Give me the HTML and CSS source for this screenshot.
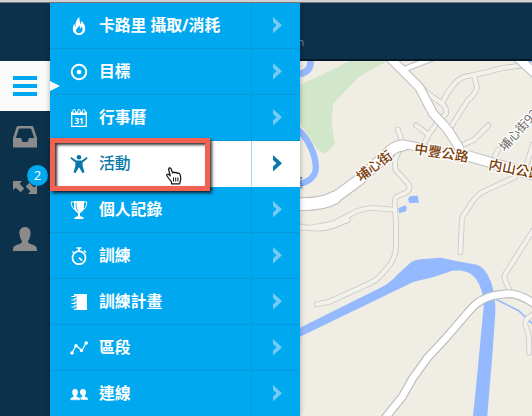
FILE: index.html
```html
<!DOCTYPE html>
<html lang="zh-Hant">
<head>
<meta charset="utf-8">
<title>活動</title>
<link rel="stylesheet" href="styles.css">
</head>
<body>
<div class="app">
  <nav class="rail">
    <div class="rail-item rail-active">
      <svg width="24" height="20" viewBox="0 0 24 20"><path fill="#00a8ef" d="M0 0h24v4H0zM0 8h24v4H0zM0 16h24v4H0z"/></svg>
    </div>
    <div class="rail-item">
      <svg width="24" height="22" viewBox="0 0 24 22"><path fill="#8b8b8b" fill-rule="evenodd" d="M5 0h14q1 0 1.400 1L24 12v9.500H0V12L3.600 1Q4 0 5 0zM6 2.500 2.800 12H8l1.500 4h5l1.500-4h5.200L18 2.500z"/></svg>
    </div>
    <div class="rail-item">
      <svg width="24" height="14" viewBox="0 0 24 14"><g fill="#8b8b8b"><path d="M0 0h9L6.700 2.700l4.500 4.800-3.500 3.800-4.900-4.600L0 9z"/><path d="M24 13h-9l2.500-2.700-4.800-4.800 3.500-3.800 5 4.700L24 4z"/></g></svg>
      <span class="badge">2</span>
    </div>
    <div class="rail-item">
      <svg width="24" height="24" viewBox="0 0 24 24"><path fill="#8b8b8b" d="M12 0c4 0 6 3 5.500 7-.3 3-1.200 5.500-2.500 7 0 2 1 2.500 4 3.500 4 1.300 5 2 5 6.500H0c0-4.500 1-5.200 5-6.500 3-1 4-1.500 4-3.500-1.300-1.500-2.200-4-2.500-7C6 3 8 0 12 0z"/></svg>
    </div>
  </nav>

  <main class="stage">
    <header class="topbar"><span>n</span></header>
    <svg class="map" viewBox="6 33 696 1065">
      <path fill="#d2e6c9" d="M6 105Q100 62 155 33H268L182 80 105 162 101 222 111 283 81 312 60 300 6 220z"/>
      <g fill="none" stroke="#95b9ff">
        <path stroke-width="20" d="M38 33Q38 66 6 72"/>
        <path stroke-width="19" d="M0 240Q28 262 46 310C62 360 55 388 6 403"/>
        <path stroke-width="5" d="M594 748 662 782 704 822"/>
      </g>
      <g fill="#95b9ff">
        <path d="M6 833 262 706Q285 690 300 672L339 637Q350 630 368 628L428 623 475 633 536 644Q562 650 579 696 594 740 592 790L582 930 575 1010 568 1098H525L539 960 551 830 557 770Q557 720 536 690C515 660 485 660 460 663L410 680 346 696 265 735 6 860z"/>
        <path d="m337 438 22-1 4 21-29 1-4-12zM301 475l20-9 6 6-3 12-21 6z"/>
        <path d="M690 33h12v12z"/>
      </g>
      <g fill="none" stroke-linecap="round" stroke-linejoin="round">
        <g class="lane-edge">
          <path d="M432 160Q445 130 468 103 485 80 515 77L570 66Q620 48 710 44"/>
          <path d="M530 82 537 112Q530 135 510 150L465 220 455 238"/>
          <path d="M375 117Q400 140 430 159 445 168 445 190L430 205M420 215 392 254 376 285M389 252 354 226M299 238 312 272M494 285 530 268 571 226"/>
          <path d="M310 295Q285 325 293 360L325 395Q342 412 328 426L300 438Q290 442 290 460L294 520V585Q294 620 275 645L245 680Q233 692 215 700L95 755 56 763"/>
          <path d="M290 479 225 474Q185 476 158 493L110 518Q65 532 6 534M0 527Q60 545 105 528L150 510"/>
          <path d="M650 382 560 423Q535 435 520 460L500 490Q490 500 491 530L487 607"/>
          <path d="M590 320 600 300M684 350 704 285M706 540 624 668Q615 680 622 693L635 720M706 793Q672 810 686 835L693 860 694 908"/>
        </g>
        <g class="lane-fill">
          <path d="M432 160Q445 130 468 103 485 80 515 77L570 66Q620 48 710 44"/>
          <path d="M530 82 537 112Q530 135 510 150L465 220 455 238"/>
          <path d="M375 117Q400 140 430 159 445 168 445 190L430 205M420 215 392 254 376 285M389 252 354 226M299 238 312 272M494 285 530 268 571 226"/>
          <path d="M310 295Q285 325 293 360L325 395Q342 412 328 426L300 438Q290 442 290 460L294 520V585Q294 620 275 645L245 680Q233 692 215 700L95 755 56 763"/>
          <path d="M290 479 225 474Q185 476 158 493L110 518Q65 532 6 534M0 527Q60 545 105 528L150 510"/>
          <path d="M650 382 560 423Q535 435 520 460L500 490Q490 500 491 530L487 607"/>
          <path d="M590 320 600 300M684 350 704 285M706 540 624 668Q615 680 622 693L635 720M706 793Q672 810 686 835L693 860 694 908"/>
        </g>
        <g stroke="#bdbdbd">
          <path stroke-width="30" d="M272 20 312 60 364 112 405 190 450 240 483 292M655 20 710 70"/>
          <path stroke-width="20" d="M318 58 400 26"/>
          <path stroke-width="34" d="M483 310 710 376"/>
          <path stroke-width="28" d="M300 286Q325 283 350 289L490 322"/>
          <path stroke-width="42" d="M-10 462Q70 466 110 443"/>
          <path stroke-width="37" d="M110 443 180 392 260 320Q285 288 315 286"/>
          <path stroke-width="27" d="M255 1112 313 1040 344 985 388 924 440 868 515 781Q545 745 590 736L630 731Q668 731 712 764"/>
        </g>
        <g stroke="#fff">
          <path stroke-width="24" d="M272 20 312 60 364 112 405 190 450 240 483 292M655 20 710 70"/>
          <path stroke-width="14" d="M318 58 400 26"/>
          <path stroke-width="28" d="M483 310 710 376"/>
          <path stroke-width="22" d="M300 286Q325 283 350 289L490 322"/>
          <path stroke-width="36" d="M-10 462Q70 466 110 443"/>
          <path stroke-width="31" d="M110 443 180 392 260 320Q285 288 315 286"/>
          <path stroke-width="20" d="M255 1112 313 1040 344 985 388 924 440 868 515 781Q545 745 590 736L630 731Q668 731 712 764"/>
        </g>
      </g>
      <g class="road-name">
        <text transform="translate(188 397) rotate(-37)">埔心街</text>
        <text transform="translate(347 310) rotate(9)">中豐公路</text>
        <text transform="translate(570 357) rotate(11)">内山公路</text>
        <text class="minor" transform="translate(620 306) rotate(-48)">埔心街92</text>
      </g>
      <text class="edge-name" x="-20" y="414">溪</text>
    </svg>
  </main>

  <div class="menu">
    <div class="row">
      <svg class="icon" viewBox="0 0 18 18"><path fill="#fff" fill-rule="evenodd" d="M9.500 0c-.7 3 1 4.500.7 7 1.100-.8 1.200-2 1-3.500 2.500 2.500 4 5 4 8 0 4-2.600 6.500-6.200 6.500S2.800 15.500 2.800 12c0-2.200.8-3.800 1.700-5.200.1 1.200.3 2 1 2.700C5 6 6.500 2 9.500 0zM9.200 8.500C8.500 10.500 6.500 11.500 6 13c-.3 1.900 1.200 3.200 3 3.200 2.200 0 3.700-1.600 3.600-3.600 0-1.200-.4-2.400-1-3.200-.2 1.200-.8 1.800-1.600 2.100.1-1.200-.2-2.200-.8-3z"/></svg>
      <span class="label">卡路里 攝取/消耗</span><span class="go"><svg width="10" height="17" viewBox="0 0 10 17"><path d="M0 0 9 8.300 0 16.500v-5l3.500-3.200L0 5z"/></svg></span>
    </div>
    <div class="row">
      <svg class="icon" viewBox="0 0 18 18"><circle cx="9" cy="9" r="7.200" fill="none" stroke="#fff" stroke-width="2"/><circle cx="9" cy="9" r="2.300" fill="#fff"/></svg>
      <span class="label">目標</span><span class="go"><svg width="10" height="17" viewBox="0 0 10 17"><path d="M0 0 9 8.300 0 16.500v-5l3.500-3.200L0 5z"/></svg></span>
    </div>
    <div class="row">
      <svg class="icon" viewBox="0 0 18 18"><path fill="none" stroke="#fff" stroke-width="1.300" d="M1.700 3.500h14.600v13.800H1.700z"/><path fill="#fff" d="M1 3h16v3H1z"/><g fill="#00a8ef" stroke="#fff"><rect x="2.800" y=".5" width="2.500" height="4" rx="1"/><rect x="7.700" y=".5" width="2.500" height="4" rx="1"/><rect x="12.600" y=".5" width="2.500" height="4" rx="1"/></g><text class="date" x="9" y="15">31</text></svg>
      <span class="label">行事曆</span><span class="go"><svg width="10" height="17" viewBox="0 0 10 17"><path d="M0 0 9 8.300 0 16.500v-5l3.500-3.200L0 5z"/></svg></span>
    </div>
    <div class="row current">
      <svg class="icon" viewBox="0 0 18 18"><g fill="#0878a9"><circle cx="9" cy="2.300" r="2.300"/><path d="m1.200 2 5 3.400h5.600l5-3.400.8 1.400-5 4.200v3.200l1.900 6.600-2 .6L9 12.200 5.500 18l-2-.6 1.900-6.600V7.600l-5-4.200z"/></g></svg>
      <span class="label">活動</span><span class="go"><svg width="10" height="17" viewBox="0 0 10 17"><path d="M0 0 9 8.300 0 16.500v-5l3.500-3.200L0 5z"/></svg></span>
    </div>
    <div class="row">
      <svg class="icon" viewBox="0 0 18 18"><path fill="#fff" d="M4 0h10v5c0 4-1.500 6-4 7v3l3.500 1.500V18h-9v-1.500L8 15v-3C5.500 11 4 9 4 5z"/><path fill="none" stroke="#fff" d="M4.500 1H1.200c0 4 1.500 7 5 8.500M13.500 1h3.300c0 4-1.500 7-5 8.500"/><path stroke="#00a8ef" stroke-width=".8" fill="none" d="M6 1.500C6 6 6.500 9 8 10.500"/></svg>
      <span class="label">個人記錄</span><span class="go"><svg width="10" height="17" viewBox="0 0 10 17"><path d="M0 0 9 8.300 0 16.500v-5l3.500-3.200L0 5z"/></svg></span>
    </div>
    <div class="row">
      <svg class="icon" viewBox="0 0 18 18"><circle cx="9" cy="10.700" r="6.500" fill="none" stroke="#fff" stroke-width="1.700"/><path d="M6.500 1h5M9 1v3M14 3.500l2 2M3.500 4.500 2.500 5.500M9 10.700l3 3" stroke="#fff" stroke-width="1.700"/></svg>
      <span class="label">訓練</span><span class="go"><svg width="10" height="17" viewBox="0 0 10 17"><path d="M0 0 9 8.300 0 16.500v-5l3.500-3.200L0 5z"/></svg></span>
    </div>
    <div class="row">
      <svg class="icon" viewBox="0 0 18 18"><path fill="#fff" d="M4 1h13v16H4z"/><path stroke="#00a8ef" stroke-width="2.400" d="M2.500 4h4M2.500 7.500h4M2.500 11h4M2.500 14.500h4"/><path stroke="#fff" stroke-width="1.100" d="M1.500 3.500h4M1.500 7h4M1.500 10.500h4M1.500 14h4"/></svg>
      <span class="label">訓練計畫</span><span class="go"><svg width="10" height="17" viewBox="0 0 10 17"><path d="M0 0 9 8.300 0 16.500v-5l3.500-3.200L0 5z"/></svg></span>
    </div>
    <div class="row">
      <svg class="icon" viewBox="0 0 18 18"><path fill="none" stroke="#fff" stroke-width="1.200" d="m2 14 4-7.500 6 5 4-7.500"/><g fill="#fff"><circle cx="2" cy="14" r="1.800"/><circle cx="6" cy="6.800" r="1.700"/><circle cx="11.500" cy="11.500" r="1.700"/><circle cx="16.200" cy="4" r="1.800"/></g></svg>
      <span class="label">區段</span><span class="go"><svg width="10" height="17" viewBox="0 0 10 17"><path d="M0 0 9 8.300 0 16.500v-5l3.500-3.200L0 5z"/></svg></span>
    </div>
    <div class="row">
      <svg class="icon" viewBox="0 0 18 18"><g fill="#fff"><path d="M13 4c2 0 3.200 1.400 3 3.500-.1 1.400-.6 2.500-1.300 3.200 0 1 .5 1.200 1.500 1.500 1.400.4 1.800 1 1.800 2.600H9.500c0-1.600.5-2.200 1.800-2.600.8-.3 1-.5 1-1.500C11.500 10 10 9 10 7.500 9.800 5.400 11 4 13 4z"/><path stroke="#00a8ef" stroke-width=".7" d="M5 3.700c2.200 0 3.400 1.500 3.200 3.800-.1 1.400-.6 2.500-1.400 3.200 0 1 .6 1.200 1.800 1.500 1.500.4 2 1 2 3H0c0-2 .5-2.600 1.800-3 1-.3 1.500-.5 1.500-1.500C2.500 10 2 9 1.900 7.500 1.700 5.200 2.800 3.700 5 3.700z"/></g></svg>
      <span class="label">連線</span><span class="go"><svg width="10" height="17" viewBox="0 0 10 17"><path d="M0 0 9 8.300 0 16.500v-5l3.500-3.200L0 5z"/></svg></span>
    </div>
  </div>

  <div class="pointer-tab"></div>
  <div class="marker"></div>
  <svg class="hand" width="17" height="18" viewBox="0 0 17 18"><path fill="#fff" stroke="#111" stroke-width="1.200" stroke-linejoin="round" d="M5.500 16.800v-2L2.500 11 .7 8.500c0-1.500 1.500-1.700 2.500-.6l1 1L2.700 2.500C2.400.5 4.600.2 5.200 2l1.300 4c.2-1.300 2-1.200 2.400 0 .4-1 2-.8 2.400.5.700-.8 2.200-.5 2.600.6.900 2.800 1.400 4.500.4 6.900l-.6 2.800z"/><path stroke="#111" d="M7.500 10.500v4M9.700 10.500v4M11.900 10.500v4"/></svg>
</div>
</body>
</html>
```

FILE: styles.css
```css
* { box-sizing: border-box; }
body {
  margin: 0;
  font-family: "Open Sans", "Noto Sans CJK TC", sans-serif;
}
svg { display: block; flex: none; }

.app {
  position: relative;
  display: flex;
  width: 532px;
  height: 416px;
  overflow: hidden;
  border-top: 2px solid #d2d2d2;
  background: #0b314b;
}
.app::before {
  content: "";
  position: absolute;
  z-index: 2;
  inset: 0 0 auto;
  height: 1px;
  background: #73777c;
}

.rail {
  width: 50px;
  padding-top: 59px;
  background: #0b314b;
}
.rail-item {
  position: relative;
  display: flex;
  align-items: center;
  justify-content: center;
  height: 51px;
}
.rail-active {
  height: 50px;
  background: #fafafa;
}
.badge {
  position: absolute;
  left: 27px;
  top: 3px;
  width: 21px;
  height: 21px;
  border-radius: 50%;
  background: #00a8ef;
  color: #fff;
  font-size: 13px;
  line-height: 21px;
  text-align: center;
}

.stage {
  order: 2;
  width: 232px;
}
.topbar {
  height: 59px;
  padding: 33px 0 0;
  overflow: hidden;
  border-bottom: 2px solid #06192b;
  color: #7e8d98;
  font-size: 10px;
  line-height: 14px;
  text-indent: -2px;
}
.map {
  width: 232px;
  height: 355px;
  background: #f0ede5;
}
.lane-edge { stroke: #c9c9c7; stroke-width: 17px; }
.lane-fill { stroke: #f3f1eb; stroke-width: 12px; }
.road-name {
  fill: #7b3c08;
  stroke: #fff;
  stroke-width: 8px;
  stroke-linejoin: round;
  paint-order: stroke;
  font-size: 41px;
  font-weight: 500;
}
.road-name .minor {
  fill: #6a685e;
  font-size: 37px;
  font-weight: 400;
}
.edge-name { fill: #4b6896; font-size: 36px; }

.menu {
  position: relative;
  z-index: 1;
  width: 250px;
  padding-top: 1px;
  background: #00a8ef;
  box-shadow: 0 0 5px rgba(0, 0, 0, .3);
}
.row {
  display: flex;
  align-items: center;
  height: 46px;
  padding-left: 20px;
  border-bottom: 1px solid #0899d8;
  color: #fff;
  font-size: 15.8px;
  font-weight: 700;
}
.icon { width: 18px; height: 18px; }
.label {
  flex: 1;
  padding: 0 0 2px 11px;
  line-height: 24px;
  white-space: nowrap;
}
.go {
  display: flex;
  align-items: center;
  align-self: stretch;
  width: 49px;
  padding-left: 21px;
  border-left: 1px solid #0899d8;
  fill: #72cbf7;
}
.go svg { margin-bottom: 1px; }
.current {
  background: #fff;
  border-bottom-color: #fff;
  color: #0878a9;
  font-weight: 500;
}
.current .go { border-left-color: #a5d5e7; fill: #0878a9; }
.date {
  fill: #fff;
  font: bold 8px "Open Sans", sans-serif;
  text-anchor: middle;
}

/* Overlays */
.pointer-tab {
  position: absolute;
  z-index: 2;
  left: 50px;
  top: 79px;
  border: solid transparent;
  border-width: 5px 0 5px 10px;
  border-left-color: #fafafa;
}
.marker {
  position: absolute;
  z-index: 3;
  left: 50px;
  top: 136px;
  width: 160px;
  height: 53px;
  border: 5px solid #f26253;
  box-shadow: 2px 2px 3px rgba(0, 0, 0, .8), inset 2px 2px 3px rgba(0, 0, 0, .8);
}
.hand {
  position: absolute;
  z-index: 4;
  left: 166px;
  top: 165px;
}
```
